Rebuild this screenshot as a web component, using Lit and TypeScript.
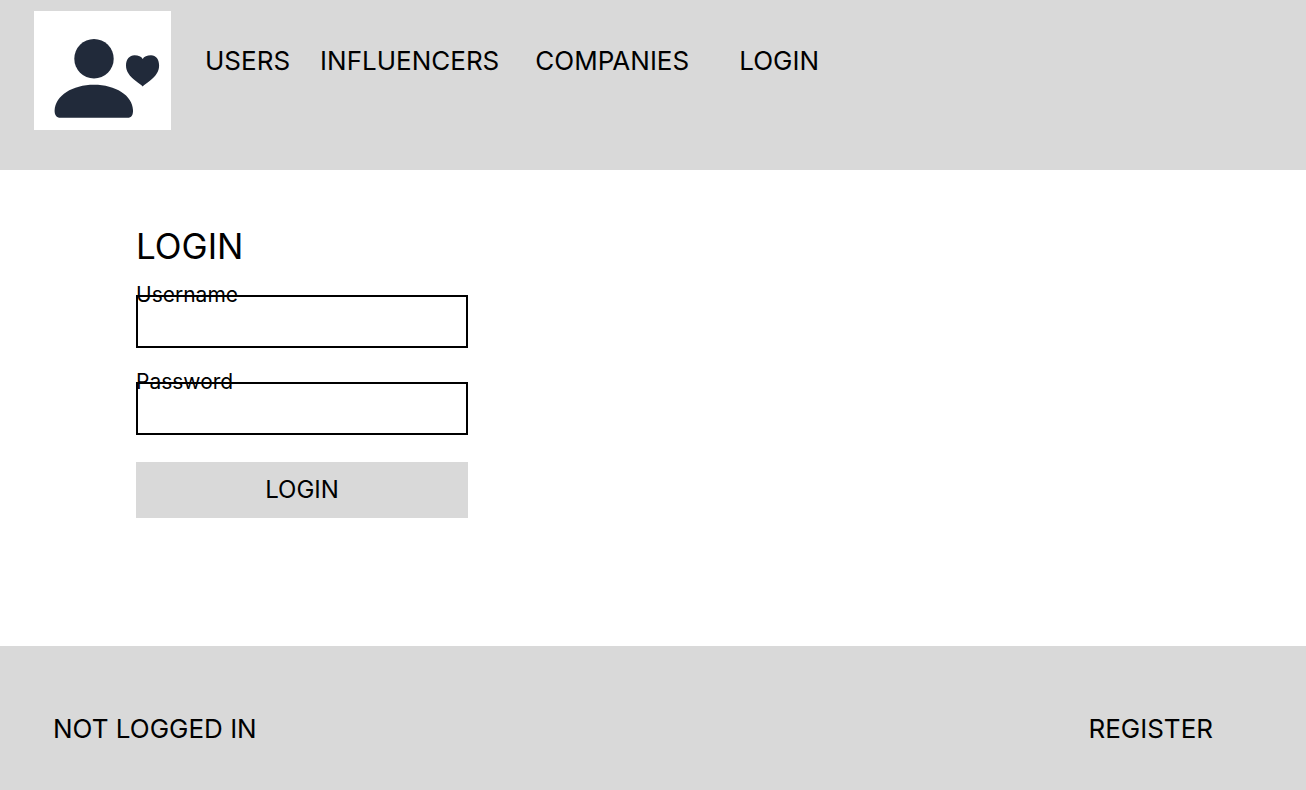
import { LitElement, html, css } from "lit";
import { customElement } from "lit/decorators.js";

@customElement("app-logo")
class AppLogo extends LitElement {
  static styles = css`
    :host {
      display: block;
      flex: none;
      width: 137px;
      height: 119px;
      background: #fff;
    }
    .art {
      display: block;
      fill: #212a3a;
    }
  `;

  render() {
    return html`
      <svg class="art" width="137" height="119" viewBox="0 0 137 119" role="img" aria-label="Home">
        <circle cx="60" cy="47.8" r="19.7" />
        <path
          d="M26.5 106.8C22.5 106.8 20.5 104 20.6 99.5C21.5 84.5 38.5 73.8 60 73.8C81.5 73.8 98.5 84.5 99 99C99.2 104 97.5 106.8 93.5 106.8Z"
        />
        <path
          d="M108.7 75.4C107.5 74 104.5 72.3 101.5 69.8C95.5 64.9 92 60.5 92 54.5C92 48.5 95.5 44.3 100.5 44.3C104.5 44.3 107.3 45.6 108.7 47.9C110.1 45.6 113 44.3 117 44.3C122 44.3 125.1 48.5 125.1 54.5C125.1 60.5 121.9 64.9 115.9 69.8C112.9 72.3 109.9 74 108.7 75.4Z"
        />
      </svg>
    `;
  }
}

@customElement("login-form")
class LoginForm extends LitElement {
  static styles = css`
    :host {
      display: block;
      max-width: 332px;
    }
    .title {
      margin: 0 0 14px;
      font-size: 35px;
      line-height: 44px;
      font-weight: 400;
    }
    .form {
      display: flex;
      flex-direction: column;
      gap: 21px;
    }
    .field {
      display: flex;
      flex-direction: column;
    }
    .label {
      font-size: 21px;
      line-height: 26px;
      margin-bottom: -13px;
    }
    .input {
      box-sizing: border-box;
      height: 53px;
      padding: 8px 12px;
      border: 2px solid #000;
      border-radius: 0;
      background: transparent;
      font: inherit;
      font-size: 21px;
      outline: none;
    }
    .submit {
      margin-top: 6px;
      height: 56px;
      padding: 0;
      border: 0;
      background: #d9d9d9;
      color: #000;
      font: inherit;
      font-size: 24px;
      line-height: 30px;
      cursor: pointer;
    }
  `;

  render() {
    return html`
      <h1 class="title">LOGIN</h1>
      <form class="form" @submit=${(e: Event) => e.preventDefault()}>
        <div class="field">
          <label class="label" for="username">Username</label>
          <input class="input" id="username" type="text" autocomplete="username" />
        </div>
        <div class="field">
          <label class="label" for="password">Password</label>
          <input class="input" id="password" type="password" autocomplete="current-password" />
        </div>
        <button class="submit" type="submit">LOGIN</button>
      </form>
    `;
  }
}

@customElement("app-root")
class AppRoot extends LitElement {
  static styles = css`
    :host {
      display: flex;
      flex-direction: column;
      min-height: 100vh;
      background: #fff;
      color: #000;
      font-family: Inter, "Liberation Sans", sans-serif;
      font-size: 26px;
      line-height: 32px;
    }
    .header {
      display: flex;
      align-items: flex-start;
      gap: 34px;
      padding: 11px 34px 40px;
      background: #d9d9d9;
    }
    .nav {
      display: flex;
      flex-wrap: wrap;
      padding-top: 34px;
    }
    .link {
      color: inherit;
      text-decoration: none;
    }
    .nav .link {
      margin-right: 30px;
    }
    .nav .wide {
      margin-right: 36px;
    }
    .nav .wider {
      margin-right: 50px;
    }
    .main {
      flex: 1;
      padding: 54px 136px;
    }
    .footer {
      display: flex;
      justify-content: space-between;
      padding: 67px 93px 45px 53px;
      background: #d9d9d9;
    }
  `;

  render() {
    return html`
      <header class="header">
        <app-logo></app-logo>
        <nav class="nav">
          <a class="link" href="#users">USERS</a>
          <a class="link wide" href="#influencers">INFLUENCERS</a>
          <a class="link wider" href="#companies">COMPANIES</a>
          <a class="link" href="#login">LOGIN</a>
        </nav>
      </header>
      <main class="main"><login-form></login-form></main>
      <footer class="footer">
        <span>NOT LOGGED IN</span>
        <a class="link" href="#register">REGISTER</a>
      </footer>
    `;
  }
}
